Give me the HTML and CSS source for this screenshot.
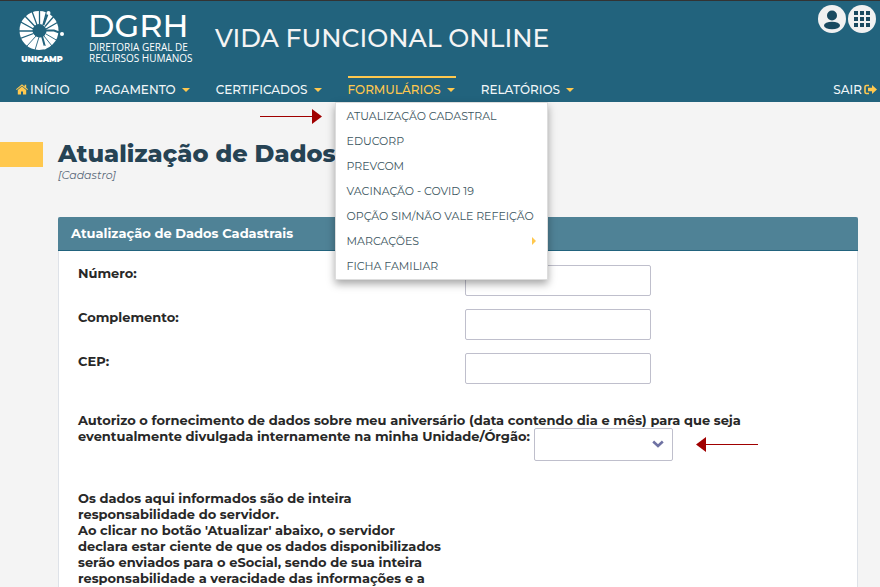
FILE: index.html
```html
<!DOCTYPE html>
<html lang="pt-BR">
<head>
<meta charset="utf-8">
<meta name="viewport" content="width=device-width, initial-scale=1">
<title>Vida Funcional Online</title>
<link rel="stylesheet" href="styles.css">
</head>
<body>
<header class="header">
  <div class="brand">
    <div class="unicamp">
      <svg class="unicamp-mark" viewBox="0 0 46 40" aria-hidden="true">
        <circle cx="20" cy="20.500" r="13" fill="none" stroke="#fff" stroke-width="13"/>
        <g stroke="#22637d" stroke-width="1.300">
          <path d="M20.500 14V0M18 15L12.500 0M16 16.500L5 5M14.500 19L0 11M14 21H0M14.500 23.500L0 29M24 15l4-15M26 16.500L36 5M27 19l14-8"/>
          <path stroke-width="0.900" d="M17 26L8 36M20 27l-4 13M27 24l12 7M25 26l8 10"/>
        </g>
        <circle cx="21" cy="21" r="6.500" fill="#22637d"/>
        <path d="M27 20.500h8l8 3M23 26l3 11M24.500 15l4.500-12" fill="none" stroke="#22637d" stroke-width="2"/>
        <g fill="#fff"><circle cx="29.500" cy="3" r="2"/><circle cx="43" cy="24" r="2"/><circle cx="25.500" cy="37.500" r="2"/></g>
      </svg>
      <span class="unicamp-name">UNICAMP</span>
    </div>
    <div class="dgrh">
      <span class="dgrh-name">DGRH</span>
      <span class="dgrh-line">DIRETORIA GERAL DE</span>
      <span class="dgrh-line">RECURSOS HUMANOS</span>
    </div>
    <h1 class="site-title">VIDA FUNCIONAL ONLINE</h1>
    <div class="tools">
      <button class="round" type="button" aria-label="Usuário">
        <svg viewBox="0 0 28 28" aria-hidden="true"><circle cx="14" cy="10.500" r="5" fill="#19495f"/><ellipse cx="14" cy="20.500" rx="8" ry="3.800" fill="#19495f"/></svg>
      </button>
      <button class="round" type="button" aria-label="Aplicativos">
        <svg viewBox="0 0 28 28" aria-hidden="true"><path fill="#19495f" d="M6 6h4v4H6zM12 6h4v4h-4zM18 6h4v4h-4zM6 12h4v4H6zM12 12h4v4h-4zM18 12h4v4h-4zM6 18h4v4H6zM12 18h4v4h-4zM18 18h4v4h-4z"/></svg>
      </button>
    </div>
  </div>
  <nav class="nav">
    <a class="nav-link home" href="#">
      <svg class="home-icon" viewBox="0 0 12 11" aria-hidden="true"><path fill="#ffc84e" d="M6 2.500L1.800 6v4.500H5V7.500h2v3h3.200V6zM6 .3L0 5.300l.7.8L6 1.700l5.300 4.400.7-.8-1.800-1.500V.8H8.600v1.700z"/></svg>
      INÍCIO
    </a>
    <a class="nav-link drop" href="#">PAGAMENTO</a>
    <a class="nav-link drop" href="#">CERTIFICADOS</a>
    <div class="nav-group">
      <a class="nav-link drop active" href="#">FORMULÁRIOS</a>
      <div class="menu">
        <a href="#">ATUALIZAÇÃO CADASTRAL</a>
        <a href="#">EDUCORP</a>
        <a href="#">PREVCOM</a>
        <a href="#">VACINAÇÃO - COVID 19</a>
        <a href="#">OPÇÃO SIM/NÃO VALE REFEIÇÃO</a>
        <a class="sub" href="#">MARCAÇÕES</a>
        <a href="#">FICHA FAMILIAR</a>
      </div>
    </div>
    <a class="nav-link drop" href="#">RELATÓRIOS</a>
    <a class="nav-link exit" href="#">SAIR
      <svg class="exit-icon" viewBox="0 0 13 12" aria-hidden="true"><path d="M5 1.500H2.500Q1 1.500 1 3v5q0 1.500 1.500 1.500H5" fill="none" stroke="#ffc84e" stroke-width="1.600"/><path fill="#ffc84e" d="M4 3.800h4V1l5 4.500L8 10V7.200H4z"/></svg>
    </a>
  </nav>
</header>
<main class="main">
  <svg class="arrow arrow-right" viewBox="0 0 62 16" aria-hidden="true"><path d="M0 8.500h54" stroke="#a00000"/><path d="M52 1l10 7.500L52 16z" fill="#a00000"/></svg>
  <div class="heading">
    <h2 class="title">Atualização de Dados Cadastrais</h2>
    <p class="crumb">[Cadastro]</p>
  </div>
  <section class="panel">
    <h3 class="panel-head">Atualização de Dados Cadastrais</h3>
    <form class="form">
      <div class="row"><label for="numero">Número:</label><input id="numero" type="text"></div>
      <div class="row"><label for="complemento">Complemento:</label><input id="complemento" type="text"></div>
      <div class="row"><label for="cep">CEP:</label><input id="cep" type="text"></div>
      <div class="consent">
        <label for="autorizo">Autorizo o fornecimento de dados sobre meu aniversário (data contendo dia e mês) para que seja<br>eventualmente divulgada internamente na minha Unidade/Órgão:</label>
        <span class="select"><select id="autorizo"><option></option></select><svg class="chevron" viewBox="0 0 12 8" aria-hidden="true"><path d="M1.200 1.500L6 6l4.800-4.500" fill="none" stroke="#6f72a3" stroke-width="2.600"/></svg>
          <svg class="arrow arrow-left" viewBox="0 0 62 16" aria-hidden="true"><path d="M8 8.500h54" stroke="#a00000"/><path d="M10 1L0 8.500 10 16z" fill="#a00000"/></svg></span>
      </div>
      <p class="notice">Os dados aqui informados são de inteira<br>responsabilidade do servidor.<br>Ao clicar no botão 'Atualizar' abaixo, o servidor<br>declara estar ciente de que os dados disponibilizados<br>serão enviados para o eSocial, sendo de sua inteira<br>responsabilidade a veracidade das informações e a</p>
    </form>
  </section>
</main>
</body>
</html>
```
FILE: styles.css
```css
* { box-sizing: border-box; }

html, body { height: 100%; }

body {
  margin: 0;
  display: flex;
  flex-direction: column;
  overflow: hidden;
  background: #f4f4f4;
  color: #282828;
  font-family: Montserrat, Inter, sans-serif;
  font-size: 13px;
  line-height: 16px;
}

a { color: inherit; text-decoration: none; }

.header {
  position: relative;
  z-index: 2;
  flex: none;
  border-top: 1px solid #333;
  background: #22637d;
  color: #fff;
}

.brand { display: flex; height: 75px; padding: 0 4px 0 19px; }

.unicamp { display: flex; flex-direction: column; align-items: center; width: 46px; padding-top: 9px; }
.unicamp-mark { width: 46px; height: 40px; }
.unicamp-name { font-size: 8px; line-height: 18px; font-weight: 900; }

.dgrh { display: flex; flex-direction: column; width: 103px; margin-left: 23px; padding-top: 9px; }
.dgrh-name { font-size: 32px; font-weight: 500; line-height: 32px; }
.dgrh-line { padding-left: 1px; font-family: "Open Sans", sans-serif; font-size: 10px; line-height: 11px; white-space: nowrap; }

.site-title { margin: 0 0 0 24px; font-size: 25px; font-weight: 500; line-height: 75px; white-space: nowrap; color: #f4f4f4; }

.tools { display: flex; gap: 2px; margin-left: auto; padding-top: 4px; }
.round { width: 28px; height: 28px; padding: 0; border: 0; border-radius: 50%; background: #f1f1f1; }
.round svg { display: block; }

.nav { display: flex; gap: 25px; padding: 0 3px 0 16px; height: 26px; }
.nav-link { display: flex; align-items: center; height: 26px; padding-bottom: 1px; border-top: 2px solid transparent; font-size: 12px; font-weight: 500; color: #f1f6f8; white-space: nowrap; }
.nav-group { position: relative; }
.drop::after { content: ""; margin: 0 1px 0 6px; border: 4px solid transparent; border-top-color: #ffc84e; border-bottom: 0; }
.nav-link.active { border-top-color: #ffc84e; color: #ffc84e; }
.home, .exit { gap: 2px; }
.home-icon { width: 12px; height: 11px; }
.exit { margin-left: auto; }
.exit-icon { width: 13px; height: 12px; }

.menu {
  position: absolute;
  top: 26px;
  left: -13px;
  width: 213px;
  padding-bottom: 1px;
  border: 1px solid #ddd;
  background: #fff;
  color: #3c5660;
  box-shadow: 0 4px 8px rgba(0, 0, 0, 0.35);
}
.menu a { display: flex; align-items: center; justify-content: space-between; height: 25px; padding: 0 11px; font-size: 11px; white-space: nowrap; }
.sub::after { content: ""; border: 4px solid transparent; border-left-color: #ffc84e; border-right: 0; }

.arrow { position: absolute; width: 62px; height: 16px; }
.arrow-right { top: 6px; left: 260px; }
.arrow-left { top: 8px; left: 162px; }

.main { position: relative; flex: 1; padding: 38px 22px 0 0; }

.heading { padding-left: 58px; background: linear-gradient(#ffc84e, #ffc84e) 0 2px / 43px 25px no-repeat; }
.title { margin: 0; font-size: 24px; line-height: 28px; font-weight: 800; color: #264354; white-space: nowrap; }
.crumb { margin: 0; font-size: 11px; line-height: 15px; font-style: italic; color: #59697a; }

.panel { margin: 34px 0 0 58px; border: 1px solid #dee2e8; background: #fff; }
.panel-head { margin: -1px; padding: 0 13px; border-bottom: 1px solid #22637d; border-radius: 2px 2px 0 0; background: #4f8296; color: #fff; font-size: 13px; font-weight: 700; line-height: 33px; }

.form { padding: 15px 20px 40px 19px; font-weight: 700; }
.row { display: grid; grid-template-columns: 51% 186px; height: 31px; margin-bottom: 13px; }
.row input { min-width: 0; border: 1px solid #bfbfcc; border-radius: 2px; background: #fff; }
.consent { margin-top: 28px; white-space: nowrap; }
.select { position: relative; display: inline-block; vertical-align: top; width: 139px; height: 33px; }
.select select { display: block; width: 100%; height: 100%; border: 1px solid #bfbfcc; border-radius: 2px; background: #fff; appearance: none; }
.chevron { position: absolute; top: 12px; right: 9px; width: 12px; height: 8px; pointer-events: none; }
.notice { margin: 29px 0 0; }
```
